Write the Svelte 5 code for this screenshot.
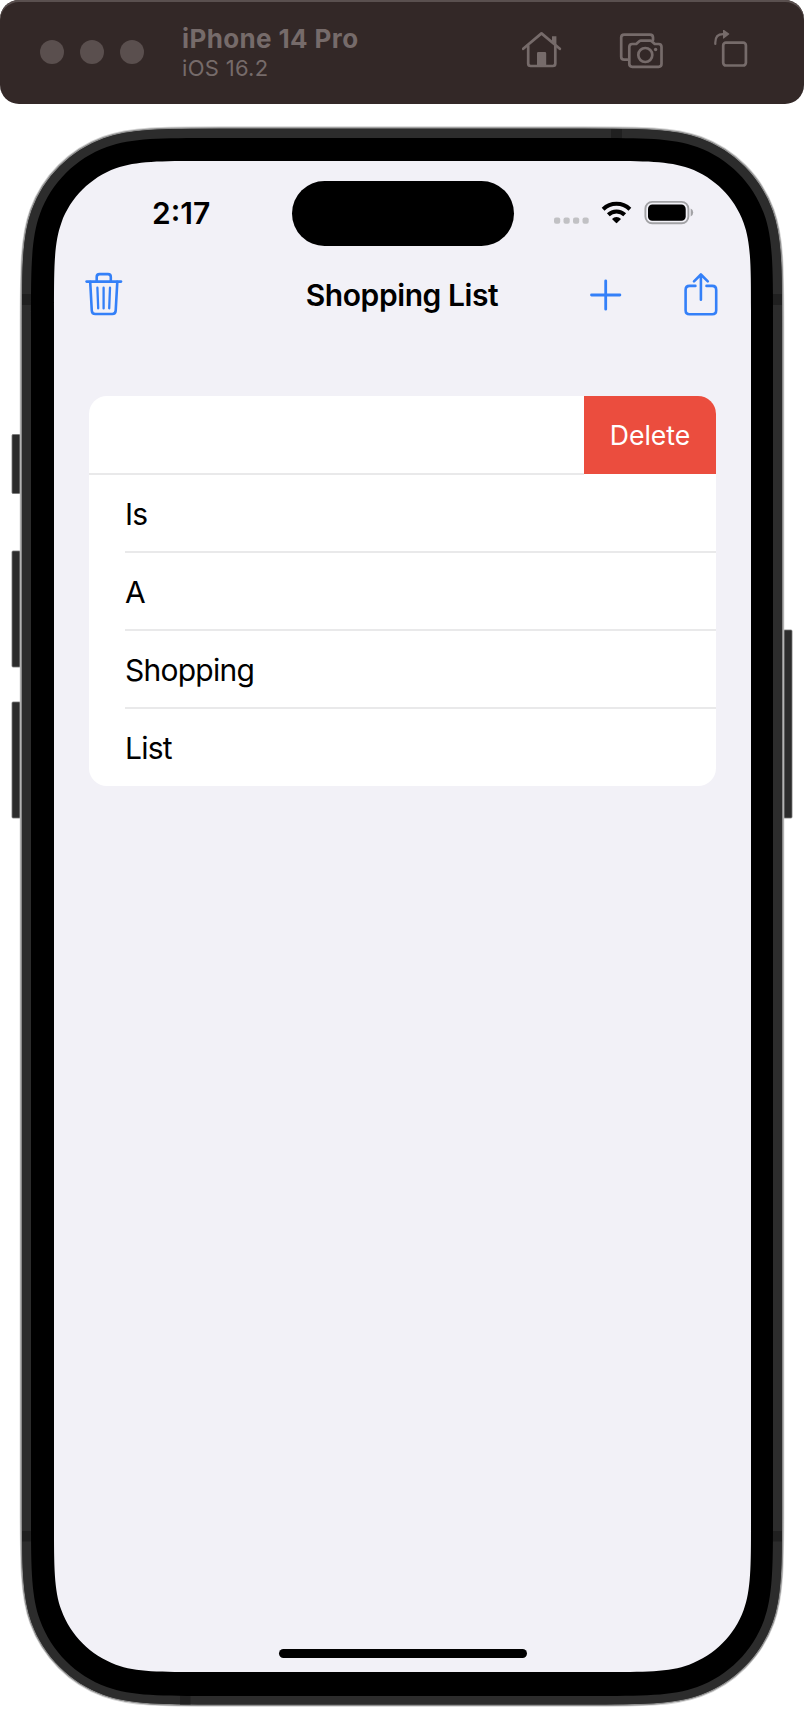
<script>
  const items = ['Is', 'A', 'Shopping', 'List'];

  // Rounded rectangle with continuous-curvature corners.
  function squircle(x, y, w, h, r) {
    const a = 1.52866 * r, b = 1.08849 * r, c = 0.8373 * r, d = 0.63149 * r;
    const e = 0.37282 * r, f = 0.16906 * r, g = 0.07491 * r;
    const R = x + w, B = y + h;
    return [
      `M${x + a} ${y}L${R - a} ${y}`,
      `C${R - b} ${y} ${R - c} ${y} ${R - d} ${y + g}`,
      `C${R - e} ${y + f} ${R - f} ${y + e} ${R - g} ${y + d}`,
      `C${R} ${y + c} ${R} ${y + b} ${R} ${y + a}`,
      `L${R} ${B - a}`,
      `C${R} ${B - b} ${R} ${B - c} ${R - g} ${B - d}`,
      `C${R - f} ${B - e} ${R - e} ${B - f} ${R - d} ${B - g}`,
      `C${R - c} ${B} ${R - b} ${B} ${R - a} ${B}`,
      `L${x + a} ${B}`,
      `C${x + b} ${B} ${x + c} ${B} ${x + d} ${B - g}`,
      `C${x + e} ${B - f} ${x + f} ${B - e} ${x + g} ${B - d}`,
      `C${x} ${B - c} ${x} ${B - b} ${x} ${B - a}`,
      `L${x} ${y + a}`,
      `C${x} ${y + b} ${x} ${y + c} ${x + g} ${y + d}`,
      `C${x + f} ${y + e} ${x + e} ${y + f} ${x + d} ${y + g}`,
      `C${x + c} ${y} ${x + b} ${y} ${x + a} ${y}Z`
    ].join('');
  }
</script>

<div class="simulator">
  <header class="toolbar">
    <div class="lights"><i></i><i></i><i></i></div>
    <div class="device">
      <strong>iPhone 14 Pro</strong>
      <span>iOS 16.2</span>
    </div>
    <div class="tools">
      <svg width="40" height="40" viewBox="522 30 40 40">
        <path d="M523.2 48.8 L541.5 33.4 L559.8 48.8" />
        <path d="M528.2 46V63.5Q528.2 66 530.7 66H552.8Q555.3 66 555.3 63.5V46" />
        <path class="solid" d="M552 36.2H556.4V45L552 41Z M537 53.3Q537 52 538.3 52H544.9Q546.2 52 546.2 53.3V66H537Z" />
      </svg>
      <svg width="44" height="40" viewBox="619 30 44 40">
        <path d="M627.5 59.7H624.2Q621.2 59.7 621.2 56.7V37.6Q621.2 34.6 624.2 34.6H650Q653 34.6 653 37.6V40" />
        <path d="M632.3 44H636.2L639.3 41.2Q640 40.6 641 40.6H650Q651 40.6 651.7 41.2L654.8 44H658.6Q661.5 44 661.5 47V63.8Q661.5 66.8 658.6 66.8H632.3Q629.3 66.8 629.3 63.8V47Q629.3 44 632.3 44Z" />
        <circle cx="645.3" cy="55" r="7" />
        <circle class="solid" cx="655.6" cy="49.5" r="1.7" />
      </svg>
      <svg width="36" height="40" viewBox="712 29.5 36 40">
        <rect x="723.2" y="42.2" width="22.7" height="22.8" rx="2.8" />
        <path d="M715.3 43.5V42Q715.3 33.7 723 33.7" stroke-width="2.2" />
        <path class="solid" d="M723 29.6Q723 28.8 723.8 29.3L729 33Q729.7 33.6 729 34.1L723.8 38Q723 38.4 723 37.6Z" />
      </svg>
    </div>
  </header>

  <section class="phone">
    <svg class="chassis" width="804" height="1606" viewBox="0 104 804 1606">
      <g class="buttons">
        <rect x="12" y="434.5" width="12" height="59" rx="1" />
        <rect x="12" y="551" width="12" height="116" rx="1" />
        <rect x="12" y="702" width="12" height="116" rx="1" />
        <rect x="780" y="630" width="12" height="188" rx="1" />
      </g>
      <path class="halo" d={squircle(20.5, 127, 763, 1579, 131)} />
      <path class="rim" d={squircle(21.2, 127.9, 761.6, 1577.3, 130)} />
      <path class="band" d={squircle(22, 129, 760, 1575.5, 129)} />
      <g class="seams">
        <rect x="22" y="294" width="10" height="11" />
        <rect x="772" y="294" width="10" height="11" />
        <rect x="22" y="1531" width="10" height="10.5" />
        <rect x="772" y="1531" width="10" height="10.5" />
        <rect x="611" y="129.3" width="11" height="10" />
        <rect x="180" y="1695" width="10.5" height="9.5" />
      </g>
      <path d={squircle(31, 138, 742, 1558, 120)} />
      <path class="glass" d={squircle(54, 161, 697, 1511, 98)} />
    </svg>

    <div class="screen">
      <div class="status">
        <time>2:17</time>
        <div class="island"></div>
        <svg width="142" height="28" viewBox="552 199 142 28">
          <g fill="#c1c1c4">
            <rect x="554" y="217.5" width="6.2" height="6.2" rx="2" />
            <rect x="563.5" y="217.5" width="6.2" height="6.2" rx="2" />
            <rect x="573" y="217.5" width="6.2" height="6.2" rx="2" />
            <rect x="582.5" y="217.5" width="6.2" height="6.2" rx="2" />
          </g>
          <g fill="none" stroke="#000" stroke-width="4">
            <path d="M603.1 209.2A19.3 19.3 0 0 1 629.9 209.2" />
            <path d="M608.3 214.7A11.8 11.8 0 0 1 624.7 214.7" />
          </g>
          <path d="M612 218.9A6.5 6.5 0 0 1 621 218.9L617.2 222.8Q616.5 223.5 615.8 222.8Z" />
          <rect x="645.4" y="201.9" width="43" height="21.4" rx="6.8" fill="none" stroke="#a2a2a5" stroke-width="1.9" />
          <rect x="648" y="204.6" width="37.7" height="16.2" rx="4.3" />
          <path d="M690.7 208.6Q693.2 209.8 693.2 212.6T690.7 216.6Z" fill="#a2a2a5" />
        </svg>
      </div>

      <nav>
        <button aria-label="Clear list">
          <svg width="38" height="46" viewBox="85 271.6 38 46">
            <path d="M86.6 281.2H121" />
            <path d="M96.7 281V276.5Q96.7 273.7 99.5 273.7H108Q110.8 273.7 110.8 276.5V281" />
            <path d="M90.2 281.5L91.8 310.3Q92 313.6 95.3 313.6H112.3Q115.5 313.6 115.7 310.3L117.3 281.5" />
            <path class="thin" d="M97.4 287.3L98.2 308M103.6 287.3V308M110 287.3L109.2 308" />
          </svg>
        </button>
        <h1>Shopping List</h1>
        <div class="actions">
          <button aria-label="Add item">
            <svg width="32" height="46" viewBox="590 272 32 46">
              <path d="M605.7 280.8V309.2M591.5 295H619.9" stroke-width="2.8" />
            </svg>
          </button>
          <button aria-label="Share">
            <svg width="36" height="46" viewBox="683 271.7 36 46">
              <path d="M695.4 285.6H689.6Q685.6 285.6 685.6 289.6V310Q685.6 314 689.6 314H712.2Q716.2 314 716.2 310V289.6Q716.2 285.6 712.2 285.6H706.5" />
              <path d="M700.9 299.5V274.5M694 281.1L700.9 274.2L707.8 281.1" />
            </svg>
          </button>
        </div>
      </nav>

      <ul>
        <li class="swiped"><button class="delete">Delete</button></li>
        {#each items as item}
          <li>{item}</li>
        {/each}
      </ul>

      <div class="home"></div>
    </div>
  </section>
</div>

<style>
  :global(body) { background: #fff; }
  .simulator {
    width: 804px;
    height: 1710px;
    overflow: hidden;
    font-family: Inter, "Liberation Sans", sans-serif;
    color: #000;
  }
  button { border: 0; padding: 0; margin: 0; background: none; font: inherit; display: block; }
  svg { display: block; }
  .toolbar {
    height: 104px;
    box-sizing: border-box;
    border-radius: 19px;
    background: #332827;
    box-shadow: inset 0 2px 0 #5a504f;
    display: flex;
    align-items: center;
    padding: 0 56px 0 40px;
  }
  .lights { display: flex; gap: 16px; }
  .lights i { width: 24px; height: 24px; border-radius: 50%; background: #5a4f4e; }
  .device { margin-left: 38px; padding-top: 2px; display: flex; flex-direction: column; color: #766b6a; white-space: nowrap; }
  strong { font-size: 26px; line-height: 30px; font-weight: 700; letter-spacing: 0.38px; }
  .device span { font-size: 22px; line-height: 28px; letter-spacing: 0.3px; }
  .tools { margin-left: auto; display: flex; gap: 53px; padding-bottom: 5px; }
  .tools svg { fill: none; stroke: #766b6a; stroke-width: 2.7; stroke-linecap: round; stroke-linejoin: round; }
  .tools svg:nth-child(1) { margin-right: 4px; }
  .tools svg:nth-child(3) { margin-left: -4px; }
  .tools .solid { fill: #766b6a; stroke: none; }

  .phone { position: relative; height: 1606px; }
  .chassis { position: absolute; inset: 0; }
  .buttons { fill: #2c2c2c; stroke: #777; stroke-width: 0.8; }
  .halo { fill: #fff; stroke: #d4d4d4; stroke-width: 1.6; }
  .rim { fill: #2c2c2c; stroke: #909090; stroke-width: 1.4; }
  .band { fill: #2c2c2c; }
  .seams { fill: #202020; }
  .glass { fill: #f2f1f7; }
  .screen {
    position: relative;
    box-sizing: border-box;
    height: 1568px;
    margin: 0 53px 0 54px;
    padding-top: 57px;
    display: flex;
    flex-direction: column;
  }
  .status {
    height: 104px;
    box-sizing: border-box;
    padding: 20px 57px 0 0;
    display: grid;
    grid-template-columns: 237.6px 222px 1fr;
    align-items: start;
  }
  time { font-size: 30px; line-height: 36px; font-weight: 600; padding: 14px 0 0 98px; }
  .island { height: 65px; border-radius: 33px; background: #000; }
  .status svg { justify-self: end; margin-top: 18px; }
  nav {
    height: 60px;
    padding: 0 32px 0 31px;
    display: grid;
    grid-template-columns: 1fr auto 1fr;
    align-items: center;
  }
  nav svg { fill: none; stroke: #3480f8; stroke-width: 2.6; stroke-linecap: round; stroke-linejoin: round; }
  nav .thin { stroke-width: 2.3; }
  h1 { margin: 0; font-size: 30px; line-height: 36px; font-weight: 600; letter-spacing: -0.42px; white-space: nowrap; }
  .actions { display: flex; justify-content: flex-end; gap: 61px; }
  ul {
    list-style: none;
    margin: 71px 35px 0;
    padding: 0;
    border-radius: 18px;
    overflow: hidden;
    background: #fff;
  }
  li {
    height: 78px;
    box-sizing: border-box;
    margin-left: 36px;
    padding-top: 1px;
    display: flex;
    align-items: center;
    font-size: 30px;
    letter-spacing: -0.75px;
    border-bottom: 2px solid #e9e9ea;
  }
  li:last-child { height: 77px; padding: 0; border: 0; }
  li.swiped {
    height: 79px;
    margin-left: 0;
    padding: 0;
    align-items: flex-start;
    justify-content: flex-end;
    border-bottom: 0;
    background: linear-gradient(#e9e9ea, #e9e9ea) left bottom / 495px 2px no-repeat;
  }
  .delete { flex: none; width: 132px; height: 78px; background: #eb4d3e; color: #fff; font-size: 26.6px; letter-spacing: 0; }
  .home { width: 248px; height: 9px; border-radius: 5px; background: #000; margin: auto auto 14px 224.5px; }
</style>
